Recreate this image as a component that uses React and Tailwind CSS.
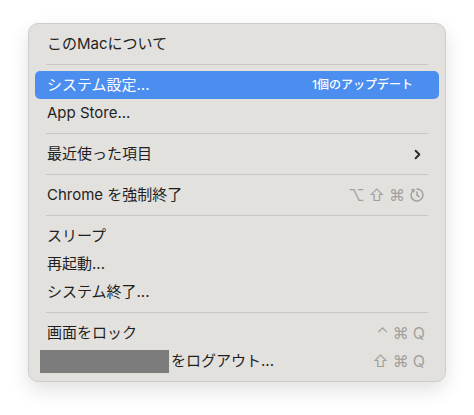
import { ChevronRight } from "lucide-react";

const font = { fontFamily: "Inter, 'Noto Sans CJK JP', sans-serif" };

function Sep() {
  return (
    <div className="h-[13px] flex items-center px-[11px]">
      <div className="h-px w-full bg-[#c9c7c4]" />
    </div>
  );
}

function Row({ children, right, active }) {
  return (
    <div
      className={
        "h-[28px] flex items-center justify-between pl-[12px] pr-[14px] rounded-[5px] " +
        (active ? "bg-[#4b8ef0] text-white" : "text-[#1f1f1f]")
      }
    >
      <div className="text-[15px] flex items-center">{children}</div>
      {right}
    </div>
  );
}

function Keys({ children }) {
  return <div className="flex items-center gap-[4px] text-[16px] text-[#a3a19e]">{children}</div>;
}

function Restart() {
  return (
    <svg width="16" height="16" viewBox="0 0 16 16" fill="none" stroke="#a3a19e" strokeWidth="1.5" strokeLinecap="round" strokeLinejoin="round">
      <path d="M5 2.8 A6 6 0 1 0 8 2" />
      <path d="M5 2.8 L3 2.5 M5 2.8 L4.6 4.8" />
      <path d="M8 5 L8 8.2 L10 9.5" />
    </svg>
  );
}

export default function App() {
  return (
    <div className="w-[474px] h-[415px] bg-white pt-[23px] pl-[28px]" style={font}>
      <div className="w-[418px] rounded-[10px] bg-[#e3e1de] border border-[#cfcdca] shadow-[0_8px_20px_rgba(0,0,0,0.12)] px-[6px] pt-[6px] pb-[6px]">
        <Row>このMacについて</Row>
        <Sep />
        <Row active right={<span className="text-[12px] font-medium pr-[12px]">1個のアップデート</span>}>システム設定...</Row>
        <Row>App Store...</Row>
        <Sep />
        <Row right={<ChevronRight size={15} strokeWidth={3} className="text-[#2a2a2a]" />}>最近使った項目</Row>
        <Sep />
        <Row
          right={
            <Keys>
              <span>⌥</span>
              <span>⇧</span>
              <span>⌘</span>
              <Restart />
            </Keys>
          }
        >
          Chrome を強制終了
        </Row>
        <Sep />
        <Row>スリープ</Row>
        <Row>再起動...</Row>
        <Row>システム終了...</Row>
        <Sep />
        <Row
          right={
            <Keys>
              <span>⌃</span>
              <span>⌘</span>
              <span>Q</span>
            </Keys>
          }
        >
          画面をロック
        </Row>
        <Row
          right={
            <Keys>
              <span>⇧</span>
              <span>⌘</span>
              <span>Q</span>
            </Keys>
          }
        >
          <span className="inline-block w-[129px] h-[23px] bg-[#7c7c7c] -ml-[7px] mr-[2px]" />
          をログアウト...
        </Row>
      </div>
    </div>
  );
}
